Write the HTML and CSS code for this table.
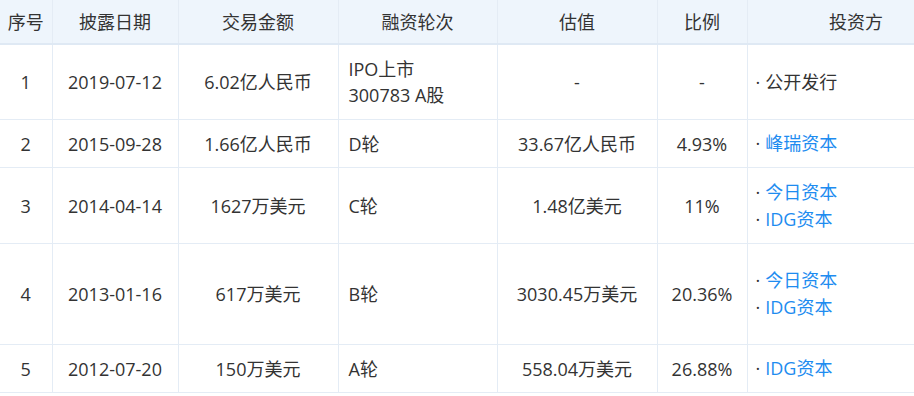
FILE: index.html
```html
<!DOCTYPE html>
<html lang="zh">
<head>
<meta charset="utf-8">
<link rel="stylesheet" href="styles.css">
</head>
<body>
<div class="wrap">
<table class="fin">
  <colgroup>
    <col class="c1"><col class="c2"><col class="c3"><col class="c4"><col class="c5"><col class="c6"><col class="c7">
  </colgroup>
  <thead>
    <tr class="head"><th>序号</th><th>披露日期</th><th>交易金额</th><th>融资轮次</th><th>估值</th><th>比例</th><th>投资方</th></tr>
  </thead>
  <tbody>
    <tr class="r1">
      <td>1</td><td>2019-07-12</td><td>6.02亿人民币</td>
      <td class="left">IPO上市<br>300783 A股</td>
      <td>-</td><td>-</td>
      <td class="left inv"><div><span class="dot">·</span>公开发行</div></td>
    </tr>
    <tr class="r2">
      <td>2</td><td>2015-09-28</td><td>1.66亿人民币</td>
      <td class="left">D轮</td>
      <td>33.67亿人民币</td><td>4.93%</td>
      <td class="left inv"><div><span class="dot">·</span><a>峰瑞资本</a></div></td>
    </tr>
    <tr class="r3">
      <td>3</td><td>2014-04-14</td><td>1627万美元</td>
      <td class="left">C轮</td>
      <td>1.48亿美元</td><td>11%</td>
      <td class="left inv"><div><span class="dot">·</span><a>今日资本</a></div><div><span class="dot">·</span><a>IDG资本</a></div></td>
    </tr>
    <tr class="r4">
      <td>4</td><td>2013-01-16</td><td>617万美元</td>
      <td class="left">B轮</td>
      <td>3030.45万美元</td><td>20.36%</td>
      <td class="left inv"><div><span class="dot">·</span><a>今日资本</a></div><div><span class="dot">·</span><a>IDG资本</a></div></td>
    </tr>
    <tr class="r5">
      <td>5</td><td>2012-07-20</td><td>150万美元</td>
      <td class="left">A轮</td>
      <td>558.04万美元</td><td>26.88%</td>
      <td class="left inv"><div><span class="dot">·</span><a>IDG资本</a></div></td>
    </tr>
  </tbody>
</table>
</div>
</body>
</html>
```
FILE: styles.css
```css
html, body {
  margin: 0;
  padding: 0;
  background: #fff;
}
.wrap {
  width: 914px;
  height: 396px;
  overflow: hidden;
}
.fin {
  border-collapse: collapse;
  table-layout: fixed;
  width: 965px;
  font-family: "Open Sans", "Noto Sans CJK SC", sans-serif;
  font-size: 18px;
  color: #333;
}
.c1 { width: 52px; }
.c2 { width: 126px; }
.c3 { width: 160px; }
.c4 { width: 159px; }
.c5 { width: 160px; }
.c6 { width: 90px; }
.c7 { width: 218px; }
.fin th, .fin td {
  padding: 0 10px;
  text-align: center;
  vertical-align: middle;
  border: 1px solid #e4ecf5;
  line-height: 26px;
  font-weight: normal;
  white-space: nowrap;
}
.fin th:first-child, .fin td:first-child { border-left: none; padding: 0; }
.fin tr:first-child th { border-top: none; }
.fin th {
  background: #eef5fc;
  border-bottom: 2px solid #dfe9f4;
  height: 43px;
}
.fin td.left { text-align: left; }
.fin td.inv { padding-left: 8px; }
.inv div { line-height: 27px; }
.dot { margin-right: 5px; color: #333; }
.inv a { color: #1e8cf0; text-decoration: none; }
.r1 td { height: 74px; }
.r2 td { height: 47px; }
.r3 td { height: 75px; }
.r4 td { height: 100px; }
.r5 td { height: 47px; }
```
